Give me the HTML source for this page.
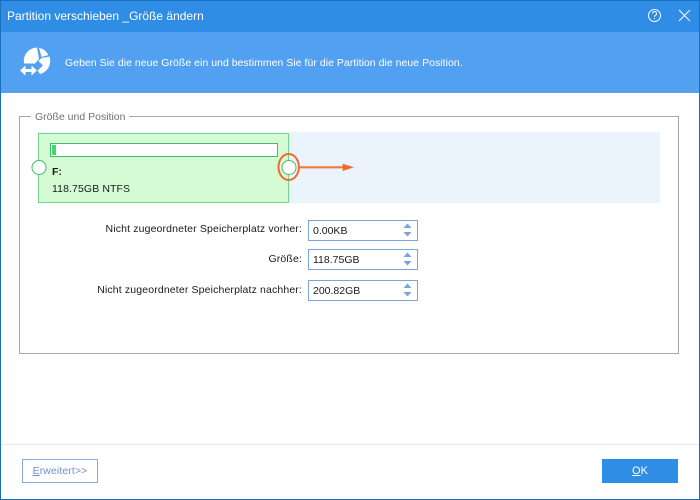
<!DOCTYPE html>
<html><head><meta charset="utf-8"><style>
html,body{margin:0;padding:0}
body{width:700px;height:500px;position:relative;overflow:hidden;background:#fff;font-family:"Liberation Sans",sans-serif;font-size:10.5px;color:#1a1a1a}
div,span.a{position:absolute;box-sizing:border-box;white-space:nowrap}
.r{text-align:right;width:260px;left:42px}
.i{left:308px;width:110px;height:21px;border:1px solid #7ba3dc;background:#fff;padding:3px 0 0 4px;line-height:14px}
</style></head><body>
<div style="left:0;top:0;width:700px;height:32px;background:#2f8de6;border-top:1px solid #1b70bd"></div>
<div style="left:0;top:32px;width:700px;height:61px;background:#52a0f2"></div>
<div style="left:7px;top:9px;color:#fff;font-size:12px;line-height:14px">Partition verschieben _Größe ändern</div>
<svg style="position:absolute;left:0;top:0" width="60" height="90" viewBox="0 0 60 90" fill="#fff">
<path d="M37 47.5 A13.5 13.5 0 0 0 24 63.5 L35 63.5 L39 59 Z"/>
<path d="M39 47.7 A13.5 13.5 0 0 1 48.3 55 L41.5 57 Z"/>
<path d="M49.5 56.5 A13.5 13.5 0 0 1 40 74 L37.7 70.5 L43 65.5 L38.5 61 L41.5 58 Z"/>
<path d="M20 70.5 L25.5 65.5 V69 H31.5 V65.5 L37 70.5 L31.5 75.5 V72 H25.5 V75.5 Z"/>
</svg>
<div style="left:65px;top:56px;color:#fff;line-height:14px;letter-spacing:.03px">Geben Sie die neue Größe ein und bestimmen Sie für die Partition die neue Position.</div>
<svg style="position:absolute;left:640px;top:0" width="60" height="32" fill="none" stroke="#fff" stroke-width="1">
<circle cx="14.5" cy="15.5" r="6"/>
<path d="M12.5 13.5 A2 2 0 1 1 15 15.5 L14.5 17"/><path d="M14.5 18 V19"/>
<path d="M39 10 L50 21 M50 10 L39 21"/>
</svg>
<div style="left:19px;top:116px;width:660px;height:238px;border:1px solid #a8a8a8"></div>
<div style="left:31px;top:110px;background:#fff;padding:0 4px;color:#707070;line-height:14px">Größe und Position</div>
<div style="left:38px;top:132px;width:622px;height:71px;background:#ebf3fd"></div>
<div style="left:38px;top:133px;width:251px;height:70px;background:#d5fbd5;border:1px solid #72d68c"></div>
<div style="left:50px;top:143px;width:228px;height:14px;background:#fff;border:1px solid #45b96e"></div>
<div style="left:52px;top:145px;width:4px;height:10px;background:#3cdc6a"></div>
<div style="left:52px;top:165px;font-weight:bold;line-height:14px">F:</div>
<div style="left:52px;top:182px;line-height:14px;letter-spacing:.1px">118.75GB NTFS</div>
<svg style="position:absolute;left:25px;top:150px" width="345" height="36">
<circle cx="14" cy="17.5" r="7" fill="#fff" stroke="#45b96e"/>
<circle cx="264" cy="17.5" r="7" fill="#fff" stroke="#45b96e"/>
<ellipse cx="263.7" cy="17" rx="10.2" ry="13" fill="none" stroke="#f5692b" stroke-width="2"/>
<path d="M275 17.3 H320" stroke="#f5763b" stroke-width="2.2"/>
<path d="M317.7 13.7 L329 17.3 L317.7 21 Z" fill="#f5692b"/>
</svg>
<div class="r" style="top:222px;line-height:14px;letter-spacing:.14px">Nicht zugeordneter Speicherplatz vorher:</div>
<div class="r" style="top:252px;line-height:14px;letter-spacing:.14px">Größe:</div>
<div class="r" style="top:283px;line-height:14px;letter-spacing:.14px">Nicht zugeordneter Speicherplatz nachher:</div>
<div class="i" style="top:220px">0.00KB</div>
<div class="i" style="top:249px">118.75GB</div>
<div class="i" style="top:280px">200.82GB</div>
<svg style="position:absolute;left:400px;top:220px" width="16" height="82" fill="#7ba3dc">
<path d="M3.5 8 L7.5 3.5 L11.5 8 Z"/><path d="M3.5 12 H11.5 L7.5 16.5 Z"/>
<path d="M3.5 37 L7.5 32.5 L11.5 37 Z"/><path d="M3.5 41 H11.5 L7.5 45.5 Z"/>
<path d="M3.5 68 L7.5 63.5 L11.5 68 Z"/><path d="M3.5 72 H11.5 L7.5 76.5 Z"/>
</svg>
<div style="left:1px;top:444px;width:698px;height:1px;background:#e3e9f0"></div>
<div style="left:22px;top:459px;width:76px;height:24px;border:1px solid #8aaade;color:#6b8fce;text-align:center;line-height:23px;letter-spacing:.1px"><u>E</u>rweitert&gt;&gt;</div>
<div style="left:602px;top:459px;width:76px;height:24px;background:#2f8de6;color:#fff;text-align:center;line-height:25px;font-size:11px"><u>O</u>K</div>
<div style="left:0;top:0;width:700px;height:500px;border:1px solid #1b70bd"></div>
</body></html>
